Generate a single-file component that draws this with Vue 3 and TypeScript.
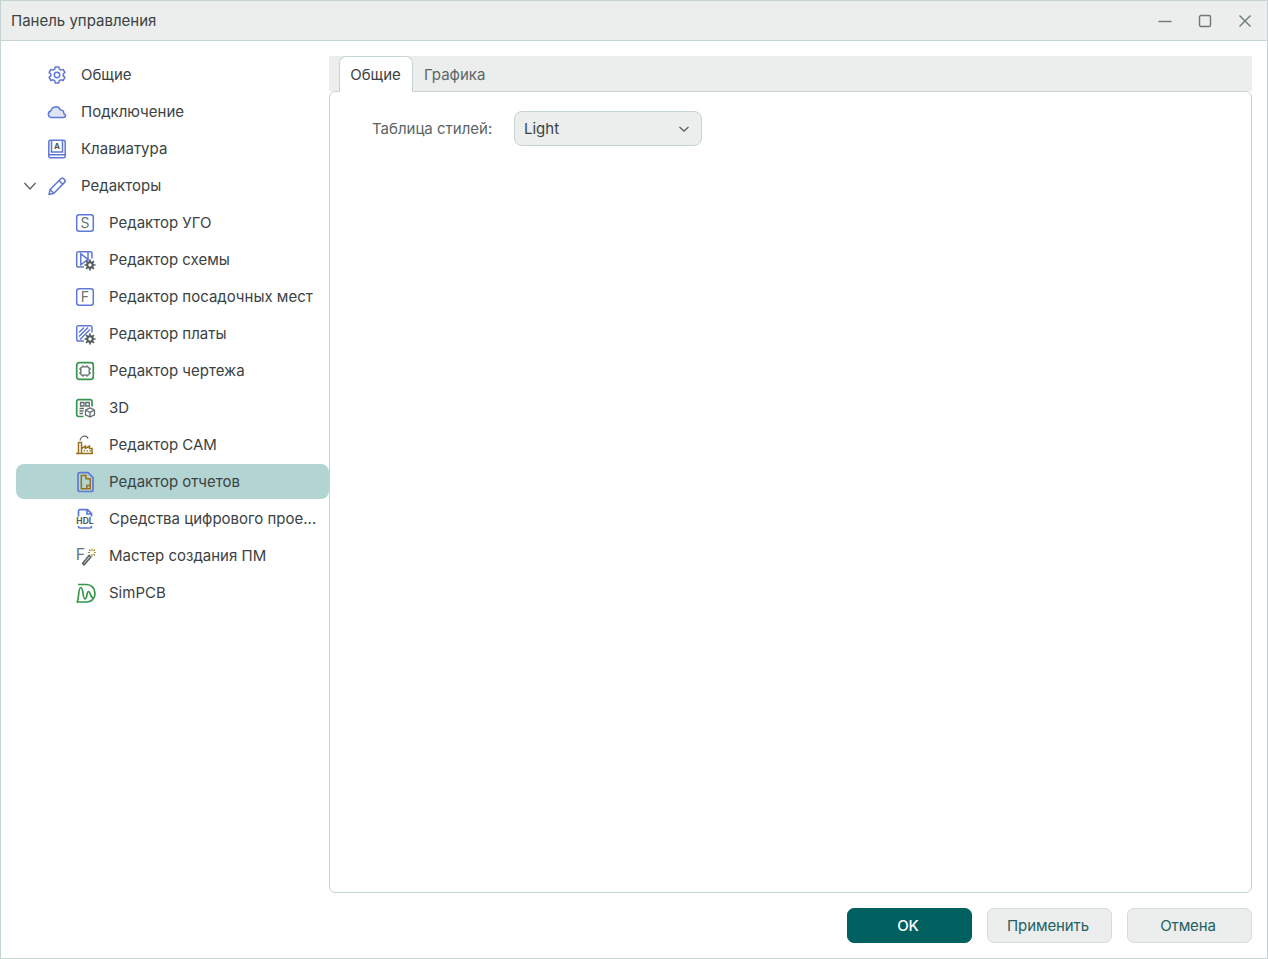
<script setup lang="ts">
import { ref } from "vue";

interface TreeItem {
  id: string;
  label: string;
  level: number;
  expanded?: boolean;
}

const items: TreeItem[] = [
  { id: "gear", label: "Общие", level: 1 },
  { id: "cloud", label: "Подключение", level: 1 },
  { id: "keyboard", label: "Клавиатура", level: 1 },
  { id: "pencil", label: "Редакторы", level: 1, expanded: true },
  { id: "sym", label: "Редактор УГО", level: 2 },
  { id: "schema", label: "Редактор схемы", level: 2 },
  { id: "foot", label: "Редактор посадочных мест", level: 2 },
  { id: "board", label: "Редактор платы", level: 2 },
  { id: "chip", label: "Редактор чертежа", level: 2 },
  { id: "3d", label: "3D", level: 2 },
  { id: "cam", label: "Редактор CAM", level: 2 },
  { id: "report", label: "Редактор отчетов", level: 2 },
  { id: "hdl", label: "Средства цифрового прое...", level: 2 },
  { id: "wizard", label: "Мастер создания ПМ", level: 2 },
  { id: "sim", label: "SimPCB", level: 2 },
];

const selected = ref("report");
const tab = ref("Общие");
const tabs = ["Общие", "Графика"];

// маленькая шестерёнка в углу иконок схемы и платы
const gearTeeth =
  "M16 10.500v2.500M16 19v2.500M10.500 16H13M19 16h2.500M12.100 12.100l1.800 1.800M18.100 18.100l1.800 1.800M19.900 12.100l-1.800 1.800M13.900 18.100l-1.800 1.800";
</script>

<template>
  <div class="window">
    <header class="titlebar">
      <span class="title">Панель управления</span>
      <div class="win-btns">
        <svg width="14" height="14" viewBox="0 0 14 14"><path d="M0.500 7.500h13" class="win-ic" /></svg>
        <svg width="14" height="14" viewBox="0 0 14 14"><rect x="1.500" y="1.500" width="11" height="11" rx="1.500" class="win-ic" /></svg>
        <svg width="14" height="14" viewBox="0 0 14 14"><path d="M1.500 1.500l11 11M12.500 1.500l-11 11" class="win-ic" /></svg>
      </div>
    </header>

    <div class="body">
      <nav class="tree">
        <div
          v-for="item in items"
          :key="item.id"
          class="row"
          :class="[`level-${item.level}`, { selected: selected === item.id }]"
          @click="selected = item.id"
        >
          <span class="indent">
            <svg v-if="item.expanded" width="14" height="10" viewBox="0 0 14 10" class="caret"><path d="M1.500 2l5.500 6 5.500-6" /></svg>
          </span>
          <svg class="icon" width="22" height="22" viewBox="0 0 22 22" fill="none">
            <template v-if="item.id === 'gear'">
              <path class="b" d="M9.200 3h3.600l.5 2.200 1.600.9 2.200-.7 1.800 3.100-1.700 1.500v1.900l1.700 1.500-1.800 3.100-2.200-.7-1.600.9-.5 2.200H9.200l-.5-2.200-1.600-.9-2.200.7-1.800-3.100 1.700-1.500v-1.900L3.100 8.500l1.800-3.100 2.200.7 1.600-.9z" stroke-linejoin="round" />
              <circle class="b" cx="11" cy="11" r="2.700" />
            </template>
            <template v-else-if="item.id === 'cloud'">
              <path class="b fill-b" d="M5.500 16.500a3.300 3.300 0 0 1-.6-6.500 4.900 4.900 0 0 1 9.300-1.300 3.900 3.900 0 0 1 3.700 3.900c.9.500 1.600 1.200 1.600 2 0 1-.8 1.900-2.200 1.900z" />
            </template>
            <template v-else-if="item.id === 'keyboard'">
              <rect class="b" x="2.800" y="2.300" width="16.400" height="17.400" rx="1.500" />
              <path class="b" d="M2.800 16.800h16.400M5.500 2.300v11.700h11V2.300" />
              <text x="11" y="10.500" class="glyph tiny">A</text>
            </template>
            <template v-else-if="item.id === 'pencil'">
              <path class="b" d="M3 19.500l1.200-5L14.800 3.700c.8-.8 2-.8 2.800 0l.9.9c.8.800.8 2 0 2.800L7.900 18.200z" stroke-linejoin="round" />
              <path class="b" d="M13 5.500l3.700 3.700M4.200 14.500l3.700 3.700" />
            </template>
            <template v-else-if="item.id === 'sym' || item.id === 'foot'">
              <rect class="b" x="2.700" y="2.700" width="16.600" height="16.600" rx="2.500" />
              <text x="11" y="16" class="glyph">{{ item.id === "sym" ? "S" : "F" }}</text>
            </template>
            <template v-else-if="item.id === 'schema'">
              <path class="b" d="M10 18H4.500a1.800 1.800 0 0 1-1.800-1.800V4.500a1.800 1.800 0 0 1 1.800-1.800h11.700a1.800 1.800 0 0 1 1.800 1.800v5" />
              <path class="b" d="M6.800 4.800v11l7.200-5.500zM14 3v9" />
              <path class="gear-s" :d="gearTeeth" />
              <circle class="gear-c" cx="16" cy="16" r="2.700" />
            </template>
            <template v-else-if="item.id === 'board'">
              <path class="b" d="M10 18H4.500a1.800 1.800 0 0 1-1.800-1.800V4.500a1.800 1.800 0 0 1 1.800-1.800h11.700a1.800 1.800 0 0 1 1.800 1.800v5" />
              <path class="b" d="M5 9.500l5-5M5 13.500l9-9M6 16.500l10-10" />
              <path class="gear-s" :d="gearTeeth" />
              <circle class="gear-c" cx="16" cy="16" r="2.700" />
            </template>
            <template v-else-if="item.id === 'chip'">
              <rect class="g" x="2.700" y="2.700" width="16.600" height="16.600" rx="2.500" />
              <rect class="s" x="6.800" y="6.800" width="8.400" height="8.400" rx="1.500" />
              <path class="s" d="M9 5.200v1.600M13 5.200v1.600M9 15.200v1.600M13 15.200v1.600M5.200 9h1.600M5.200 13h1.600M15.200 9h1.600M15.200 13h1.600" />
            </template>
            <template v-else-if="item.id === '3d'">
              <path class="g" d="M9.500 19.500H4.500a1.800 1.800 0 0 1-1.800-1.800V4.500a1.800 1.800 0 0 1 1.800-1.800h11.700a1.800 1.800 0 0 1 1.800 1.800v5" />
              <path class="s" d="M6.500 5.500h3.500V9H6.500zM11.800 5.500h3.500V9h-3.500zM5.500 11.500h4.500M5.500 14h4M5.500 16.500h3.500" />
              <path class="s" d="M16 10.800l4.500 2.200v4.800L16 20l-4.500-2.200V13zM11.500 13l4.500 2.300 4.500-2.300M16 15.300V20" stroke-linejoin="round" />
            </template>
            <template v-else-if="item.id === 'cam'">
              <path class="br" d="M2 19.500h17M4.500 19.500V8.500h3v11M7.500 14.500l4-2.500v2.500l4-2.500v2.500H18v5" />
              <path class="s" d="M6 6.500C6.500 3.500 9 2 11 2.200c1.800.2 2.800 1.200 2.800 2.600" />
              <path class="dots" d="M9.500 16.800h1.500M12.500 16.800H14M15.500 16.800H17" />
            </template>
            <template v-else-if="item.id === 'report'">
              <path class="b thick" d="M6 1.700h8l5 5V18.500a2 2 0 0 1-2 2H6a2 2 0 0 1-2-2V3.700a2 2 0 0 1 2-2z" />
              <path class="br" d="M12 4.500H7.300v13.300h8.900v-10H12zM16.200 14.500h-3.400v3.300" />
            </template>
            <template v-else-if="item.id === 'hdl'">
              <path class="b thick" d="M4.500 8.500V3.200A1.500 1.500 0 0 1 6 1.700h7.500l4 4v2.800M13 1.700v4.300h4.500M4.500 18v.5A1.500 1.500 0 0 0 6 20h10a1.500 1.500 0 0 0 1.500-1.500V18" />
              <text x="11" y="16" class="glyph hdl">HDL</text>
            </template>
            <template v-else-if="item.id === 'wizard'">
              <text x="6.500" y="14.500" class="glyph wiz">F</text>
              <path class="wand" d="M8.500 18.500l1.500 1.500 7-8-1.800-1.800z" stroke-linejoin="round" />
              <path class="br-y" d="M18 3.500v2.500M18 9v2.500M20 7.500h1.800M13.800 7.500H16M15 4.500l1.500 1.500M21 4.500L19.500 6M21 10.500L19.500 9" />
            </template>
            <template v-else-if="item.id === 'sim'">
              <path class="g" d="M2.500 20h10c5 0 8.500-3.500 8.500-8.500 0-5.500-4-9-8.500-9H4" />
              <path class="g" d="M3 20c2-1 1-14.500 3.800-14.500S8.500 17 11 17s1.500-7.500 3.500-7.500 1.500 6.500 5 6.500" />
            </template>
          </svg>
          <span class="label">{{ item.label }}</span>
        </div>
      </nav>

      <main class="content">
        <div class="tabbar">
          <button
            v-for="t in tabs"
            :key="t"
            class="tab"
            :class="{ active: tab === t }"
            @click="tab = t"
          >
            {{ t }}
          </button>
        </div>
        <section class="panel">
          <div class="form-row">
            <label>Таблица стилей:</label>
            <div class="select">
              <span>Light</span>
              <svg width="12" height="8" viewBox="0 0 12 8" class="caret"><path d="M1.500 2l4.500 4 4.500-4" /></svg>
            </div>
          </div>
        </section>
        <footer class="actions">
          <button class="btn primary">OK</button>
          <button class="btn">Применить</button>
          <button class="btn">Отмена</button>
        </footer>
      </main>
    </div>
  </div>
</template>

<style>
html,
body {
  margin: 0;
  background: #fff;
}
</style>

<style scoped>
.window {
  box-sizing: border-box;
  width: 1268px;
  height: 959px;
  border: 1px solid #c5d4d2;
  display: flex;
  flex-direction: column;
  font-family: Inter, "Noto Sans", sans-serif;
  font-size: 15px;
  color: #3b4242;
  background: #fff;
}

.titlebar {
  flex: none;
  height: 40px;
  box-sizing: border-box;
  background: #ebeeed;
  border-bottom: 1px solid #c5d4d2;
  display: flex;
  align-items: center;
  justify-content: space-between;
  padding: 0 15px 0 10px;
}

.win-btns {
  display: flex;
  gap: 26px;
}

.win-ic {
  fill: none;
  stroke: #6c7777;
  stroke-width: 1.400;
}

.body {
  flex: 1;
  min-height: 0;
  display: flex;
  padding: 15px;
}

.tree {
  width: 313px;
  flex: none;
  padding-top: 1px;
  display: flex;
  flex-direction: column;
  gap: 2px;
}

.row {
  height: 35px;
  display: flex;
  align-items: center;
  border-radius: 8px;
  white-space: nowrap;
  cursor: default;
}

.row.selected {
  background: #b2d4d2;
}

.indent {
  flex: none;
  width: 30px;
  display: flex;
  padding-left: 7px;
  box-sizing: border-box;
}

.level-2 .indent {
  width: 58px;
}

.icon {
  flex: none;
  margin-right: 13px;
}

.caret path {
  fill: none;
  stroke: #5a6565;
  stroke-width: 1.400;
}

.b {
  stroke: #5f78d8;
  stroke-width: 1.500;
}

.b.thick {
  stroke-width: 1.700;
}

.fill-b {
  fill: #dfe5f9;
}

.g {
  stroke: #35964b;
  stroke-width: 1.700;
}

.s {
  stroke: #5f6b6b;
  stroke-width: 1.300;
}

.br {
  stroke: #98701c;
  stroke-width: 1.500;
}

.dots {
  stroke: #98701c;
  stroke-width: 1.200;
}

.br-y {
  stroke: #a98a2c;
  stroke-width: 1.100;
}

.wand {
  fill: #c4caca;
  stroke: #4f5a5a;
  stroke-width: 1.300;
}

.gear-s {
  stroke: #4f5a5a;
  stroke-width: 1.700;
}

.gear-c {
  fill: #fff;
  stroke: #4f5a5a;
  stroke-width: 2;
}

.glyph {
  font-family: Inter, sans-serif;
  font-size: 14px;
  fill: #6b7575;
  text-anchor: middle;
}

.glyph.tiny {
  font-size: 8px;
  font-weight: 700;
  fill: #4f5a5a;
}

.glyph.hdl {
  font-size: 8.500px;
  font-weight: 700;
  fill: #4f5a5a;
}

.glyph.wiz {
  font-size: 16px;
}

.content {
  flex: 1;
  min-width: 0;
  display: flex;
  flex-direction: column;
}

.tabbar {
  flex: none;
  height: 35px;
  background: #ebeeed;
  display: flex;
  padding-left: 10px;
}

.tab {
  height: 36px;
  box-sizing: border-box;
  padding: 0 11px;
  border: 0;
  background: transparent;
  font: inherit;
  color: #5b6565;
}

.tab.active {
  width: 74px;
  padding: 0 1px 1px 0;
  background: #fff;
  color: #3b4242;
  border: 1px solid #c5d4d2;
  border-bottom: 0;
  border-radius: 7px 7px 0 0;
  position: relative;
  z-index: 1;
}

.panel {
  flex: 1;
  min-height: 0;
  box-sizing: border-box;
  border: 1px solid #c5d4d2;
  border-radius: 6px;
  padding: 19px 0 0 42px;
}

.form-row {
  display: flex;
  align-items: center;
  gap: 20px;
}

.form-row label {
  width: 122px;
  color: #5b6565;
}

.select {
  width: 188px;
  height: 35px;
  box-sizing: border-box;
  background: #ebeeed;
  border: 1px solid #c5d4d2;
  border-radius: 8px;
  display: flex;
  align-items: center;
  justify-content: space-between;
  padding: 0 11px 0 9px;
}

.actions {
  flex: none;
  display: flex;
  justify-content: flex-end;
  gap: 15px;
  padding-top: 15px;
}

.btn {
  width: 125px;
  height: 35px;
  box-sizing: border-box;
  border: 1px solid #d3dddc;
  border-radius: 7px;
  background: #ebeeed;
  font: inherit;
  letter-spacing: -0.1px;
  padding: 0 3px 0 0;
  color: #245f63;
}

.btn.primary {
  background: #006060;
  border-color: #006060;
  color: #fff;
  font-weight: 500;
}
</style>
